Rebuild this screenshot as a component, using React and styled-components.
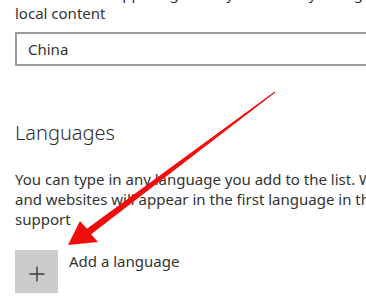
import styled, { createGlobalStyle } from "styled-components";

const GlobalStyle = createGlobalStyle`
  html, body {
    margin: 0;
    padding: 0;
    background: #ffffff;
    overflow: hidden;
  }
  body {
    font-family: "Noto Sans", "Open Sans", sans-serif;
    color: #333333;
  }
`;

const Page = styled.div`
  position: relative;
  width: 366px;
  height: 306px;
  overflow: hidden;
  padding-left: 15px;
  box-sizing: border-box;
`;

const Text = styled.p`
  margin: ${(p) => p.$margin || "0"};
  font-size: 15px;
  line-height: 20px;
  white-space: nowrap;
`;

const Select = styled.div`
  display: flex;
  align-items: center;
  width: 400px;
  height: 34px;
  box-sizing: border-box;
  border: 2px solid #9d9d9d;
  padding-left: 11px;
  margin-top: 9px;
  font-size: 15px;
  line-height: 20px;
`;

const Heading = styled.h2`
  margin: 53px 0 0;
  font-size: 20px;
  font-weight: 300;
  line-height: 28px;
  color: #2e2e2e;
`;

const AddRow = styled.div`
  display: flex;
  align-items: flex-start;
  gap: 11px;
  margin-top: 21px;
`;

const AddButton = styled.div`
  width: 43px;
  height: 43px;
  background: #cccccc;
  display: flex;
  align-items: center;
  justify-content: center;
  padding-top: 4px;
  box-sizing: border-box;
`;

const AddLabel = styled.span`
  font-size: 15px;
  line-height: 20px;
  margin-top: 1px;
`;

const Arrow = styled.svg`
  position: absolute;
  left: 0;
  top: 0;
  pointer-events: none;
`;

const App = () => {
  return (
    <Page>
      <GlobalStyle />
      <Text $margin="-17px 0 0">
        Windows and apps might use your country or region to give you
        <br />
        local content
      </Text>
      <Select>China</Select>
      <Heading>Languages</Heading>
      <Text $margin="22px 0 0">
        You can type in any language you add to the list. Windows, apps,
        <br />
        and websites will appear in the first language in the list that they
        <br />
        support
      </Text>
      <AddRow>
        <AddButton>
          <svg width="16" height="16" viewBox="0 0 16 16">
            <path d="M8 0.5V15.5M0.5 8H15.5" stroke="#3a3a3a" strokeWidth="1.4" fill="none" />
          </svg>
        </AddButton>
        <AddLabel>Add a language</AddLabel>
      </AddRow>
      <Arrow width="366" height="306" viewBox="0 0 366 306">
        <polygon
          points="68,245 80,221 86.9,228.7 274.7,91.6 275.3,92.4 91.1,234.3 98,242"
          fill="#f20d0d"
        />
      </Arrow>
    </Page>
  );
};

export default App;
